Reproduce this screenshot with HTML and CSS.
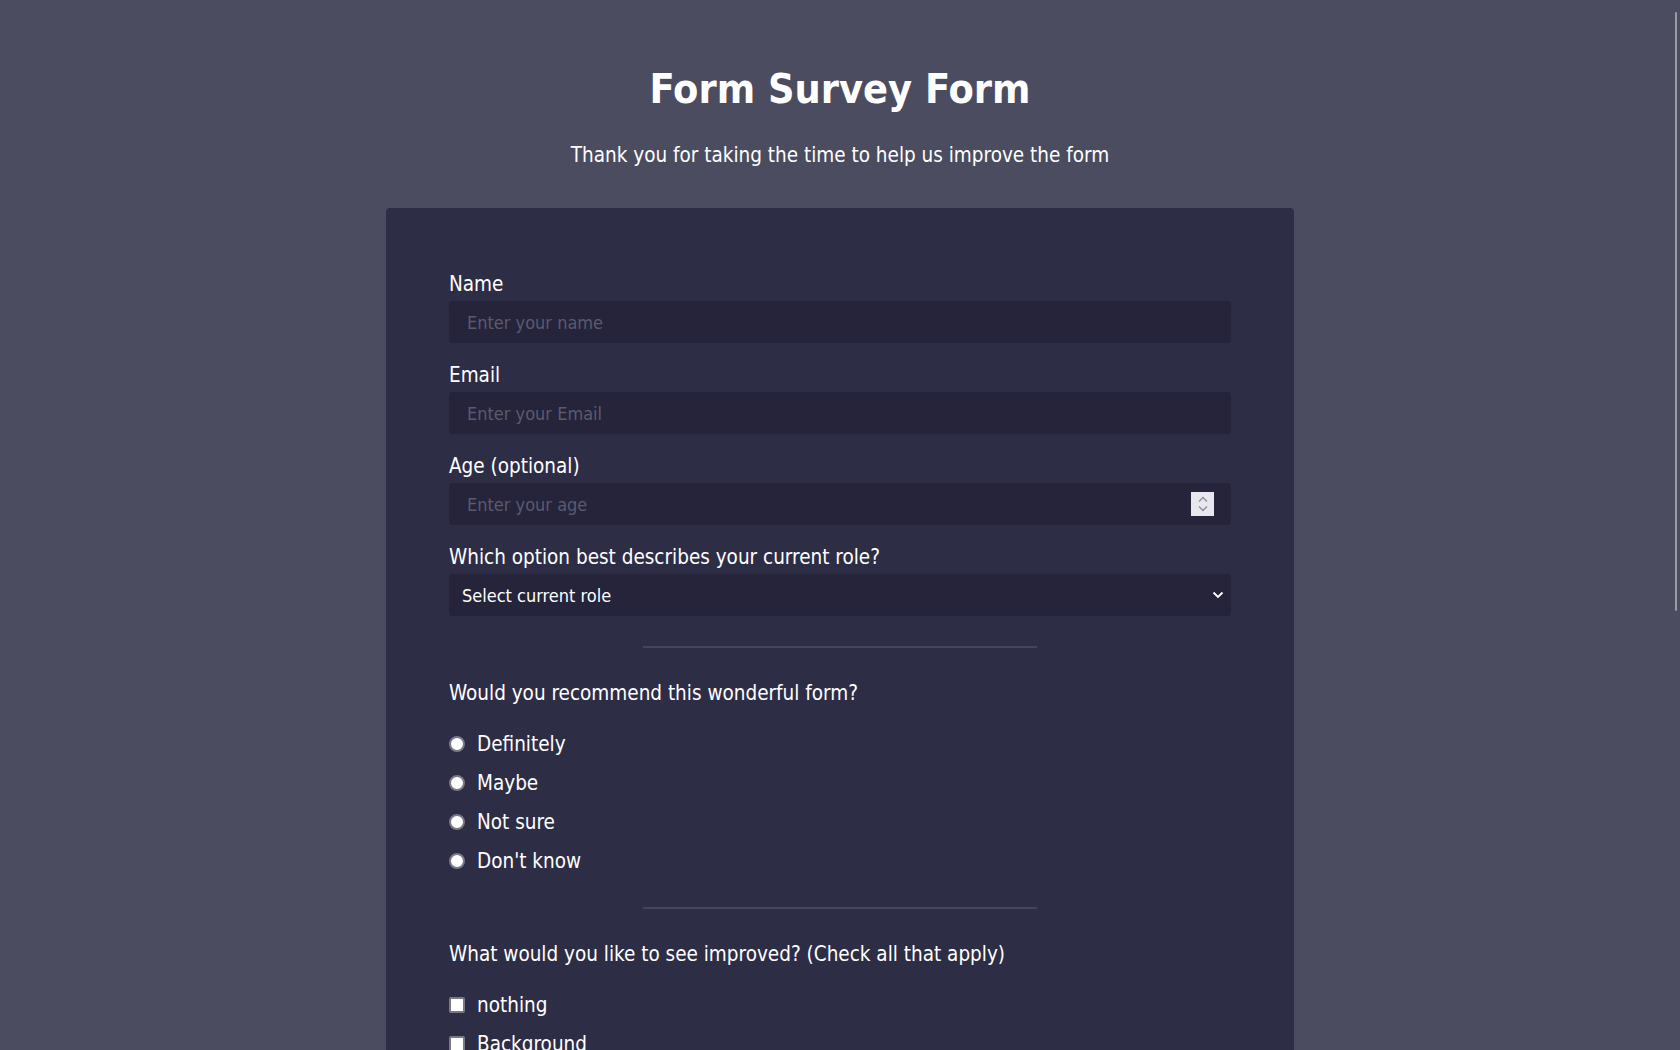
FILE: index.html
```html
<!DOCTYPE html>
<html lang="en">
<head>
<meta charset="utf-8">
<title>Form Survey Form</title>
<link rel="stylesheet" href="styles.css">
</head>
<body>
<div class="scroll-thumb" aria-hidden="true"></div>
<header class="header">
  <h1 class="title">Form Survey Form</h1>
  <p class="description">Thank you for taking the time to help us improve the form</p>
</header>
<form class="survey">
  <div class="group">
    <label class="label" for="name">Name</label>
    <input class="input" id="name" type="text" placeholder="Enter your name">
  </div>
  <div class="group">
    <label class="label" for="email">Email</label>
    <input class="input" id="email" type="email" placeholder="Enter your Email">
  </div>
  <div class="group">
    <label class="label" for="age">Age (optional)</label>
    <div class="number-wrap">
      <input class="input" id="age" type="text" placeholder="Enter your age">
      <span class="spinner"><svg width="12" height="18" viewBox="0 0 12 18"><path d="M2 6.5 L6 2.5 L10 6.5" fill="none" stroke="#8e8d9c" stroke-width="1.3"/><path d="M2 11.5 L6 15.5 L10 11.5" fill="none" stroke="#8e8d9c" stroke-width="1.3"/></svg></span>
    </div>
  </div>
  <div class="group">
    <label class="label" for="role">Which option best describes your current role?</label>
    <div class="select-wrap">
      <select class="select" id="role">
        <option>Select current role</option>
        <option>Student</option>
        <option>Full Time Job</option>
        <option>Full Time Learner</option>
        <option>Prefer not to say</option>
        <option>Other</option>
      </select>
      <svg class="chev" width="12" height="8" viewBox="0 0 12 8"><path d="M1.5 1.5 L6 6 L10.5 1.5" fill="none" stroke="#ffffff" stroke-width="1.8"/></svg>
    </div>
  </div>

  <hr class="divider">

  <p class="question">Would you recommend this wonderful form?</p>
  <ul class="choices">
    <li class="choice"><span class="radio"></span><span>Definitely</span></li>
    <li class="choice"><span class="radio"></span><span>Maybe</span></li>
    <li class="choice"><span class="radio"></span><span>Not sure</span></li>
    <li class="choice"><span class="radio"></span><span>Don't know</span></li>
  </ul>

  <hr class="divider">

  <p class="question">What would you like to see improved? (Check all that apply)</p>
  <ul class="choices">
    <li class="choice"><span class="check"></span><span>nothing</span></li>
    <li class="choice"><span class="check"></span><span>Background</span></li>
    <li class="choice"><span class="check"></span><span>Colors</span></li>
    <li class="choice"><span class="check"></span><span>Fonts</span></li>
    <li class="choice"><span class="check"></span><span>Layout</span></li>
  </ul>

  <hr class="divider">

  <div class="group">
    <label class="label" for="comments">Any comments or suggestions?</label>
    <textarea class="textarea" id="comments" placeholder="Enter your comment here..."></textarea>
  </div>
  <button class="submit" type="button">Submit</button>
</form>
</body>
</html>
```
FILE: styles.css
```css
* { box-sizing: border-box; }
html { background: #4b4c60; }
body {
  margin: 0;
  padding: 0 0 60px;
  background: #4b4c60;
  color: #ffffff;
  font-family: "DejaVu Sans", Verdana, sans-serif;
  font-stretch: semi-condensed;
}
::-webkit-scrollbar { width: 0; height: 0; }

.scroll-thumb {
  position: fixed;
  top: 12px;
  right: 3px;
  width: 2px;
  height: 599px;
  background: #9b9ba3;
  border-radius: 1px;
}

.header { text-align: center; padding-top: 62px; }
.title {
  margin: 0;
  font-size: 41px;
  line-height: 54px;
  font-weight: 700;
}
.description {
  margin: 27px 0 0;
  font-size: 20.5px;
  line-height: 24px;
}

.survey {
  width: 908px;
  margin: 41px auto 0;
  padding: 64px 63px 60px;
  background: #2e2d46;
  border-radius: 4px;
}
.group { margin-bottom: 20px; }
.label {
  display: block;
  font-size: 20.5px;
  line-height: 24px;
  margin-bottom: 5px;
}
.input, .select, .textarea {
  display: block;
  width: 100%;
  height: 42px;
  border: none;
  border-radius: 4px;
  background: #25243b;
  color: #ffffff;
  font-family: inherit;
  font-stretch: semi-condensed;
  font-size: 18px;
  padding: 0 18px;
  outline: none;
}
.input::placeholder, .textarea::placeholder { color: #5b5a70; }
.number-wrap, .select-wrap { position: relative; }
.spinner {
  position: absolute;
  right: 17px;
  top: 9px;
  width: 23px;
  height: 24px;
  background: #e8e7ee;
  display: flex;
  align-items: center;
  justify-content: center;
}
.select {
  appearance: none;
  -webkit-appearance: none;
  font-size: 18px;
  padding: 0 13px;
}
.chev { position: absolute; right: 7px; top: 17px; pointer-events: none; }

.divider {
  width: 394px;
  margin: 30px auto 0;
  border: none;
  border-top: 2px solid #45455a;
}
.choices + .divider { margin-top: 27px; }
.question {
  margin: 33px 0 0;
  font-size: 20.5px;
  line-height: 24px;
}
.choices { list-style: none; margin: 19px 0 0; padding: 0; }
.choice {
  display: flex;
  align-items: center;
  gap: 12px;
  height: 39px;
  font-size: 20.5px;
}
.radio {
  width: 16px;
  height: 16px;
  border-radius: 50%;
  background: #ffffff;
  border: 2px solid #7a7a86;
  flex: none;
}
.check {
  width: 16px;
  height: 16px;
  border-radius: 2px;
  background: #ffffff;
  border: 2px solid #7a7a86;
  flex: none;
}
.textarea { height: 120px; padding: 12px 18px; resize: vertical; margin-top: 0; }
.submit {
  display: block;
  width: 100%;
  height: 46px;
  margin-top: 30px;
  border: none;
  border-radius: 4px;
  background: #37af65;
  color: #ffffff;
  font-family: inherit;
  font-size: 20px;
}
```
